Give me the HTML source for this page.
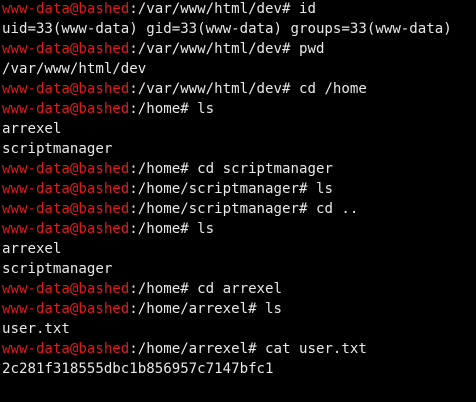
<!DOCTYPE html>
<html><head><style>
html,body{margin:0;padding:0;background:#000;width:476px;height:402px;overflow:hidden}
pre{margin:0;padding:0 0 0 2px;position:absolute;top:-1px;left:0;font-family:"DejaVu Sans Mono","Liberation Mono",monospace;font-size:14.1px;line-height:20px;color:#e8e8e8}
.r{color:#e01b1b}
</style></head><body>
<pre><span class="r">www-data@bashed</span>:/var/www/html/dev# id
uid=33(www-data) gid=33(www-data) groups=33(www-data)
<span class="r">www-data@bashed</span>:/var/www/html/dev# pwd
/var/www/html/dev
<span class="r">www-data@bashed</span>:/var/www/html/dev# cd /home
<span class="r">www-data@bashed</span>:/home# ls
arrexel
scriptmanager
<span class="r">www-data@bashed</span>:/home# cd scriptmanager
<span class="r">www-data@bashed</span>:/home/scriptmanager# ls
<span class="r">www-data@bashed</span>:/home/scriptmanager# cd ..
<span class="r">www-data@bashed</span>:/home# ls
arrexel
scriptmanager
<span class="r">www-data@bashed</span>:/home# cd arrexel
<span class="r">www-data@bashed</span>:/home/arrexel# ls
user.txt
<span class="r">www-data@bashed</span>:/home/arrexel# cat user.txt
2c281f318555dbc1b856957c7147bfc1</pre>
</body></html>
